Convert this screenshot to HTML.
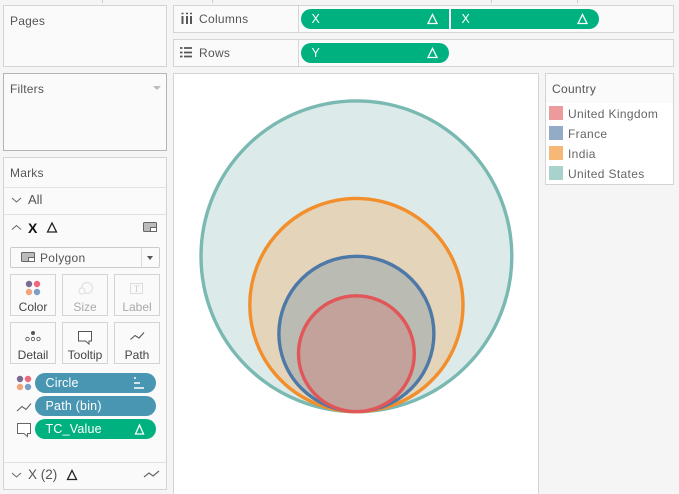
<!DOCTYPE html>
<html><head><meta charset="utf-8">
<style>
html,body{margin:0;padding:0;}
body{width:679px;height:494px;overflow:hidden;background:#f5f5f5;position:relative;font-family:"Liberation Sans",sans-serif;font-size:12px;color:#555;}
.b{position:absolute;box-sizing:border-box;border:1px solid #d4d4d4;background:#fafafa;}
.a{position:absolute;}
.t{position:absolute;white-space:nowrap;line-height:14px;}
.p{position:absolute;height:20px;border-radius:10px;color:#fff;background:#00b180;line-height:20px;box-sizing:border-box;padding-left:10.500px;font-size:12.500px;letter-spacing:.2px;}
.blue{background:#4996b2;}
.btn{position:absolute;box-sizing:border-box;border:1px solid #d4d4d4;width:46px;height:42px;background:#fafafa;}
.btn span{position:absolute;left:0;right:0;top:25px;text-align:center;line-height:14px;font-size:12px;color:#444;}
svg{position:absolute;overflow:visible;}
</style></head><body>
<div class="a" style="left:102px;top:0;width:1px;height:3px;background:#ccc"></div>
<div class="a" style="left:212px;top:0;width:1px;height:3px;background:#ccc"></div>
<div class="a" style="left:491px;top:0;width:1px;height:3px;background:#ccc"></div>
<div class="a" style="left:577px;top:0;width:1px;height:3px;background:#ccc"></div>

<div class="b" style="left:3px;top:5px;width:164px;height:62px"></div>
<div class="t" style="left:10px;top:14px;letter-spacing:.2px">Pages</div>
<div class="b" style="left:3px;top:73px;width:164px;height:78px;border-color:#b4b4b4"></div>
<div class="t" style="left:10px;top:82px;letter-spacing:.2px">Filters</div>
<div class="a" style="left:153px;top:86px;width:0;height:0;border-left:4px solid transparent;border-right:4px solid transparent;border-top:4px solid #bbb"></div>

<div class="b" style="left:3px;top:157px;width:164px;height:333px"></div>
<div class="t" style="left:10px;top:166px;letter-spacing:.2px">Marks</div>
<div class="a" style="left:4px;top:187px;width:162px;height:1px;background:#e2e2e2"></div>
<div class="a" style="left:4px;top:214px;width:162px;height:1px;background:#e2e2e2"></div>
<div class="a" style="left:4px;top:462px;width:162px;height:1px;background:#e2e2e2"></div>

<div class="t" style="left:28px;top:193px;font-size:13px;">All</div>
<div class="t" style="left:28px;top:221px;font-size:14px;color:#111;font-weight:bold">X</div>
<div class="t" style="left:28px;top:468px;font-size:13.500px;">X (2)</div>

<div class="a" style="left:10px;top:247px;width:150px;height:21px;box-sizing:border-box;border:1px solid #ccc;background:#fafafa;border-radius:2px"></div>
<div class="a" style="left:141px;top:248px;width:1px;height:19px;background:#ddd"></div>
<div class="t" style="left:40px;top:251px;letter-spacing:.3px">Polygon</div>
<div class="a" style="left:147px;top:256px;width:0;height:0;border-left:3.500px solid transparent;border-right:3.500px solid transparent;border-top:4px solid #555"></div>

<div class="btn" style="left:10px;top:274px"><span>Color</span></div>
<div class="btn" style="left:62px;top:274px"><span style="color:#aaa">Size</span></div>
<div class="btn" style="left:114px;top:274px"><span style="color:#aaa">Label</span></div>
<div class="btn" style="left:10px;top:322px"><span>Detail</span></div>
<div class="btn" style="left:62px;top:322px"><span>Tooltip</span></div>
<div class="btn" style="left:114px;top:322px"><span>Path</span></div>

<div class="p blue" style="left:35px;top:373px;width:121px">Circle</div>
<div class="p blue" style="left:35px;top:396px;width:121px">Path (bin)</div>
<div class="p" style="left:35px;top:419px;width:121px">TC_Value</div>

<svg style="left:0;top:0" width="170" height="494">
<path d="M12 198l4.500 4 4.500-4" fill="none" stroke="#666" stroke-width="1"/>
<path d="M12 229.500l4.500-4 4.500 4" fill="none" stroke="#666" stroke-width="1"/>
<path d="M12 473l4.500 4 4.500-4" fill="none" stroke="#666" stroke-width="1"/>
<path d="M47.500 232l4.500-9 4.500 9z" fill="none" stroke="#222" stroke-width="1.300"/>
<path d="M67.500 479.500l4.500-9 4.500 9z" fill="none" stroke="#222" stroke-width="1.300"/>
<rect x="143.500" y="222.500" width="13" height="9" rx="1" fill="#bbb" stroke="#666"/>
<rect x="150.500" y="227.500" width="6" height="4" fill="#fff" stroke="#666"/>
<rect x="21.500" y="252.500" width="13" height="9" rx="1" fill="#bbb" stroke="#666"/>
<rect x="28.500" y="257.500" width="6" height="4" fill="#fff" stroke="#666"/>
<path d="M144 477l5-4 4 3 6-5" fill="none" stroke="#666" stroke-width="1.200"/>
<circle cx="29" cy="284" r="3.200" fill="#7b6a94"/><circle cx="37" cy="284" r="3.200" fill="#ec6a7c"/><circle cx="29" cy="292" r="3.200" fill="#f0a57a"/><circle cx="37" cy="292" r="3.200" fill="#7d9fc4"/>
<circle cx="87" cy="288" r="5.500" fill="none" stroke="#ddd"/><circle cx="82" cy="291" r="3" fill="#fafafa" stroke="#ddd"/>
<rect x="130.500" y="283.500" width="12" height="10" fill="none" stroke="#ddd"/>
<text x="136.500" y="292" font-family="Liberation Serif" font-size="9" fill="#ccc" text-anchor="middle">T</text>
<circle cx="33" cy="333" r="2" fill="#555"/><circle cx="27.500" cy="339" r="1.700" fill="none" stroke="#555" stroke-width=".8"/><circle cx="33" cy="339" r="1.700" fill="none" stroke="#555" stroke-width=".8"/><circle cx="38.500" cy="339" r="1.700" fill="none" stroke="#555" stroke-width=".8"/>
<path d="M78.500 331.500h13v9.500h-2.500v3l-3.500-3h-7z" fill="#fff" stroke="#555"/>
<path d="M130.500 339.500l4.500-4 4 2.500 5-5.500" fill="none" stroke="#555" stroke-width="1.100"/>
<circle cx="20" cy="379" r="3.200" fill="#7b6a94"/><circle cx="28" cy="379" r="3.200" fill="#ec6a7c"/><circle cx="20" cy="387" r="3.200" fill="#f0a57a"/><circle cx="28" cy="387" r="3.200" fill="#7d9fc4"/>
<path d="M17 411l5-4.500 4 3 5-6" fill="none" stroke="#666" stroke-width="1.100"/>
<path d="M17.500 423.500h13v10h-3v3l-3.500-3h-6.500z" fill="#fff" stroke="#666"/>
<path d="M134 378h2M134 383h6M134 388h10" stroke="#fff" stroke-width="1.500" fill="none"/>
<path d="M135.500 434l4-9 4 9z" fill="none" stroke="#fff" stroke-width="1.300"/>
</svg>

<div class="b" style="left:173px;top:5px;width:501px;height:28px"></div>
<div class="a" style="left:298px;top:6px;width:1px;height:26px;background:#d4d4d4"></div>
<div class="b" style="left:173px;top:39px;width:501px;height:28px"></div>
<div class="a" style="left:298px;top:40px;width:1px;height:26px;background:#d4d4d4"></div>
<div class="t" style="left:199px;top:12px;letter-spacing:.3px">Columns</div>
<div class="t" style="left:199px;top:46px;letter-spacing:.3px">Rows</div>
<div class="p" style="left:301px;top:9px;width:148px;border-radius:10px 0 0 10px">X</div>
<div class="p" style="left:451px;top:9px;width:148px;border-radius:0 10px 10px 0">X</div>
<div class="p" style="left:301px;top:43px;width:148px">Y</div>
<svg style="left:0;top:0" width="679" height="70">
<path d="M182.500 16v8M187 16v8M191 16v8" stroke="#555" stroke-width="2"/>
<path d="M181.500 13.500h2M186 13.500h2M190 13.500h2" stroke="#555" stroke-width="1.500"/>
<path d="M180 48h2.500M184 48h8M180 52.500h2.500M184 52.500h8M180 56.500h2.500M184 56.500h8" stroke="#555" stroke-width="1.700"/>
<path d="M428 23.500l4.500-9 4.500 9z" fill="none" stroke="#fff" stroke-width="1.300"/>
<path d="M578 23.500l4.500-9 4.500 9z" fill="none" stroke="#fff" stroke-width="1.300"/>
<path d="M428 57.500l4.500-9 4.500 9z" fill="none" stroke="#fff" stroke-width="1.300"/>
</svg>

<div class="a" style="left:173px;top:73px;width:366px;height:421px;box-sizing:border-box;border:1px solid #d4d4d4;border-bottom:0;background:#fff"></div>
<svg style="left:0;top:0" width="679" height="494">
<circle cx="356.400" cy="256.300" r="155.400" fill="#dcebe9" stroke="#7ab8b2" stroke-width="3.400"/>
<circle cx="356.400" cy="305" r="106.600" fill="#e3d4ba" stroke="#f28e2b" stroke-width="3.400"/>
<circle cx="356.400" cy="333.800" r="77.500" fill="#babcb4" stroke="#4e79a7" stroke-width="3.400"/>
<circle cx="356.400" cy="353.700" r="57.900" fill="#c3a29b" stroke="#e15759" stroke-width="3.400"/>
</svg>

<div class="a" style="left:545px;top:73px;width:129px;height:112px;box-sizing:border-box;border:1px solid #d4d4d4;background:#fff"></div>
<div class="a" style="left:546px;top:74px;width:127px;height:29px;background:#fafafa"></div>
<div class="t" style="left:552px;top:82px;letter-spacing:.3px">Country</div>
<div class="a" style="left:549px;top:106px;width:14px;height:14px;background:#ec9a9c"></div>
<div class="a" style="left:549px;top:126px;width:14px;height:14px;background:#93abc6"></div>
<div class="a" style="left:549px;top:146px;width:14px;height:14px;background:#f7b877"></div>
<div class="a" style="left:549px;top:166px;width:14px;height:14px;background:#aad2cd"></div>
<div class="t" style="left:568px;top:107px;letter-spacing:.35px;color:#666">United Kingdom</div>
<div class="t" style="left:568px;top:127px;letter-spacing:.35px;color:#666">France</div>
<div class="t" style="left:568px;top:147px;letter-spacing:.35px;color:#666">India</div>
<div class="t" style="left:568px;top:167px;letter-spacing:.35px;color:#666">United States</div>
</body></html>
